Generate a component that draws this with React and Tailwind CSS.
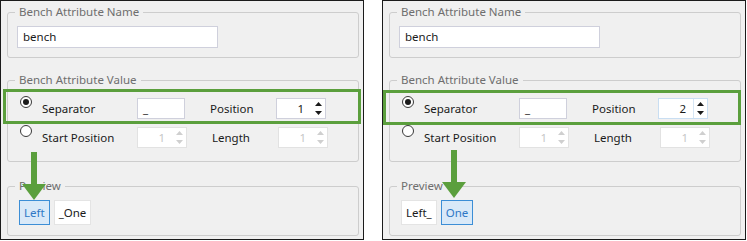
import React from 'react';

function GroupBox({ title, className, children }) {
  return (
    <fieldset className={`rounded-[3px] border border-[#cdcdcd] p-0 ${className}`}>
      <legend className="ml-[7px] px-[4px] text-[11.5px] leading-[16px] text-[#6e6e6e]">{title}</legend>
      {children}
    </fieldset>
  );
}

function Radio({ checked }) {
  return (
    <span className="-mt-[2px] flex h-[12px] w-[12px] shrink-0 items-center justify-center self-start rounded-full border border-[#3a3a3a] bg-white">
      {checked && <span className="h-[6px] w-[6px] rounded-full bg-[#1a1a1a]" />}
    </span>
  );
}

function Spin({ value, disabled, focused }) {
  const border = disabled ? 'border-[#e2e2e2]' : focused ? 'border-[#c9def2]' : 'border-[#cfd0dc]';
  const arrow = disabled ? '#cfcfcf' : '#1a1a1a';
  return (
    <div className={`flex h-[21px] w-[50px] border bg-white ${border}`}>
      <span className={`flex-1 pr-[7px] text-right leading-[19px] ${disabled ? 'text-[#c6c6c6]' : 'text-[#1a1a1a]'}`}>{value}</span>
      <span className={`flex w-[14px] flex-col items-center justify-center gap-[5px] ${focused ? 'border-l border-[#d6e6f5]' : ''}`}>
        <svg width="7" height="4" viewBox="0 0 7 4"><polygon points="3.5,0 7,4 0,4" fill={arrow} /></svg>
        <svg width="7" height="4" viewBox="0 0 7 4"><polygon points="0,0 7,0 3.5,4" fill={arrow} /></svg>
      </span>
    </div>
  );
}

function DownArrow({ className }) {
  return (
    <svg className={`absolute ${className}`} width="24" height="48" viewBox="0 0 24 48">
      <rect x="9" y="0" width="6" height="33" fill="#5b9f3d" />
      <polygon points="0,32 24,32 12,48" fill="#5b9f3d" />
    </svg>
  );
}

function Panel({ position, selected, arrowClass, greenClass, focused }) {
  const chips = selected === 0 ? ['Left', '_One'] : ['Left_', 'One'];
  return (
    <div className="relative h-[240px] w-[364px] shrink-0 border border-[#1b1b1b] bg-[#f0f0f0] pl-[6px] pr-[4px]">
      <GroupBox title="Bench Attribute Name" className="mt-[3px]">
        <div className="pb-[9px] pl-[9px] pt-[6px]">
          <div className="h-[22px] w-[201px] border border-[#cfd0dc] bg-white pl-[5px] leading-[20px] text-[#1a1a1a]">bench</div>
        </div>
      </GroupBox>

      <GroupBox title="Bench Attribute Value" className="mt-[14px]">
        <div className="flex flex-col gap-[8px] pb-[13px] pl-[12px] pt-[10px]">
          <div className="flex h-[21px] items-center">
            <Radio checked />
            <span className="ml-[10px] w-[95px] text-[#1a1a1a]">Separator</span>
            <div className="h-[21px] w-[48px] border border-[#cfd0dc] bg-white pl-[5px] leading-[19px] text-[#1a1a1a]">_</div>
            <span className="ml-[25px] w-[66px] text-[#1a1a1a]">Position</span>
            <Spin value={position} focused={focused} />
          </div>
          <div className="flex h-[21px] items-center">
            <Radio />
            <span className="ml-[10px] w-[95px] text-[#1a1a1a]">Start Position</span>
            <Spin value="1" disabled />
            <span className="ml-[25px] w-[66px] text-[#1a1a1a]">Length</span>
            <Spin value="1" disabled />
          </div>
        </div>
      </GroupBox>

      <GroupBox title="Preview" className="mt-[16px]">
        <div className="flex gap-[4px] pb-[10px] pl-[11px] pt-[6px]">
          {chips.map((c, i) => (
            <span
              key={c}
              className={
                i === selected
                  ? 'h-[25px] border border-[#3c8ed6] bg-[#d9e9f8] px-[4px] leading-[23px] text-[#2f78c6]'
                  : 'h-[25px] border border-[#e4e4e4] bg-white px-[4px] leading-[23px] text-[#1a1a1a]'
              }
            >
              {c}
            </span>
          ))}
        </div>
      </GroupBox>

      <div className={`absolute h-[35px] w-[358px] border-[3px] border-[#5b9f3d] ${greenClass}`} />
      <DownArrow className={arrowClass} />
    </div>
  );
}

export default function App() {
  return (
    <div className="flex h-[241px] w-[747px] gap-[18px] bg-white text-[11.5px] font-['Noto_Sans',sans-serif]">
      <Panel position="1" selected={0} arrowClass="left-[21px] top-[151px]" greenClass="left-[2px] top-[88px]" />
      <Panel position="2" selected={1} arrowClass="left-[59px] top-[149px]" greenClass="left-[0px] top-[89px]" focused />
    </div>
  );
}
